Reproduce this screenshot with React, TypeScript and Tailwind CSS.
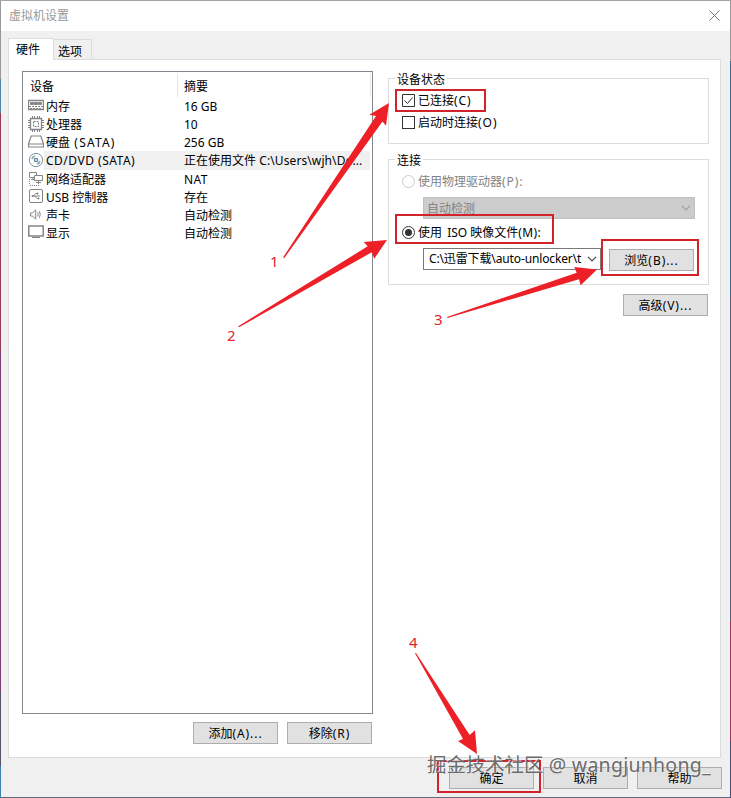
import type { ReactNode } from "react"

const s = { fill: "none", stroke: "#858585", strokeWidth: 1 }

const MemoryIcon = () => (
  <svg width="16" height="16" viewBox="0 0 16 16" {...s}>
    <path d="M.5 2.5h15v9H.5z" strokeWidth="1.3" />
    <path d="M2.5 4.5h3v2h-3zM6.5 4.5h3v2h-3zM10.5 4.5h3v2h-3z" fill="#858585" />
    <path d="M1 8.5h14M2 10.5h12" strokeDasharray="2 1" />
  </svg>
)

const CpuIcon = () => (
  <svg width="16" height="16" viewBox="0 0 16 16" {...s}>
    <path d="M2.5 2.5h11v11h-11z" strokeWidth="1.3" />
    <path d="M5.5 5.5h5v5h-5z" strokeDasharray="2 1" />
    <path d="M4.5 0v2M6.5 0v2M9.5 0v2M11.5 0v2M4.5 14v2M6.5 14v2M9.5 14v2M11.5 14v2M0 4.5h2M0 6.5h2M0 9.5h2M0 11.5h2M14 4.5h2M14 6.5h2M14 9.5h2M14 11.5h2" />
  </svg>
)

const DiskIcon = () => (
  <svg width="16" height="16" viewBox="0 0 16 16" {...s}>
    <path d="M3.2 2h9.6l2.7 8v3H.5v-3zM.5 10h15" strokeWidth="1.2" />
  </svg>
)

const DiscIcon = () => (
  <svg width="16" height="16" viewBox="0 0 16 16" fill="none">
    <circle cx="8" cy="8" r="6.7" stroke="#7895a6" />
    <circle cx="8" cy="8" r="1.6" stroke="#64869a" strokeWidth="1.4" />
    <path d="M4 7a4.2 4.2 0 0 1 3-3M12 9a4.2 4.2 0 0 1-3 3" stroke="#8aa5b4" strokeWidth="1.8" />
  </svg>
)

const NetworkIcon = () => (
  <svg width="16" height="16" viewBox="0 0 16 16" {...s}>
    <path d="M1.5 1.5h7v5h-7zM5 6.5v2M3 8.5h3" />
    <path d="M6.5 4.5h8v5h-8z" fill="#fff" />
    <path d="M10.5 9.5v2M8 11.5h5" />
    <path d="M1.5 8v6M2 14.5h9M10.5 12v2" strokeDasharray="1 1" />
  </svg>
)

const UsbIcon = () => (
  <svg width="16" height="16" viewBox="0 0 16 16" {...s}>
    <rect x="1.5" y=".5" width="13" height="13" rx="1.5" />
    <path d="M4 7h8M5.5 7l2-2.5h2M7 7l2 2.5h1.5" />
    <path d="M4 6.5h1v1H4zM9 4h1v1H9zM10 9h1v1h-1z" fill="#858585" />
  </svg>
)

const SoundIcon = () => (
  <svg width="16" height="16" viewBox="0 0 16 16" {...s}>
    <path d="M2.5 6h2l3.2-3.2v9.4L4.5 9h-2z" />
    <path d="M9.7 5.5q1 2 0 4M11.4 4.2q1.7 3.3 0 6.6" />
  </svg>
)

const DisplayIcon = () => (
  <svg width="16" height="16" viewBox="0 0 16 16" {...s}>
    <path d="M.8 1h14.4v10H.8z" strokeWidth="1.5" />
    <path d="M4 12.5h8" />
  </svg>
)

const devices = [
  { icon: MemoryIcon, name: "内存", summary: "16 GB" },
  { icon: CpuIcon, name: "处理器", summary: "10" },
  { icon: DiskIcon, name: <>硬盘<span className="tracking-[1.2px]"> (SATA)</span></>, summary: "256 GB" },
  {
    icon: DiscIcon,
    name: <span className="tracking-[0.5px]">CD/DVD (SATA)</span>,
    summary: <>正在使用文件<span className="tracking-[0.1px]"> C:\Users\wjh\De...</span></>,
    selected: true,
  },
  { icon: NetworkIcon, name: "网络适配器", summary: <span className="tracking-[0.4px]">NAT</span> },
  { icon: UsbIcon, name: "USB 控制器", summary: "存在" },
  { icon: SoundIcon, name: "声卡", summary: "自动检测" },
  { icon: DisplayIcon, name: "显示", summary: "自动检测" },
]

function Latin({ children }: { children: ReactNode }) {
  return <span className="tracking-[0.95px]">{children}</span>
}

function Button({ children }: { children: ReactNode }) {
  return (
    <button className="flex h-[22px] w-[85px] shrink-0 items-center justify-center border border-[#adadad] bg-[#e1e1e1] pt-0.5">
      {children}
    </button>
  )
}

function Group({ title, className, children }: { title: string; className: string; children: ReactNode }) {
  return (
    <fieldset className={`w-[321px] border border-[#dcdcdc] ${className}`}>
      <legend className="ml-1.5 h-4 px-0.5 leading-[19px]">{title}</legend>
      {children}
    </fieldset>
  )
}

function Chevron({ color }: { color: string }) {
  return (
    <svg width="10" height="6" viewBox="0 0 10 6" fill="none" stroke={color} strokeWidth="1.2">
      <path d="M1 .8l4 4 4-4" />
    </svg>
  )
}

function DeviceList() {
  return (
    <div className="h-[643px] w-[351px] border border-[#828790] bg-white">
      <div className="flex h-[25px] pt-px">
        <div className="w-[155px] border-r border-[#e5e5e5] pl-[7px] leading-[27px]">设备</div>
        <div className="w-[193px] border-r border-[#e5e5e5] pl-1.5 leading-[27px]">摘要</div>
      </div>
      {devices.map(({ icon: Icon, name, summary, selected }, i) => (
        <div key={i} className="flex h-[18.15px] items-center pl-[5px]">
          <Icon />
          <div className={`flex h-full w-[326px] items-center pt-0.5 ${selected ? "bg-[#f0f0f0]" : ""}`}>
            <span className="w-[138px] pl-0.5">{name}</span>
            <span className="pl-0.5">{summary}</span>
          </div>
        </div>
      ))}
    </div>
  )
}

function Annotations() {
  return (
    <>
      <svg className="pointer-events-none absolute inset-0" width="731" height="798" fill="#ec2026">
        <path d="M283 257.5L376 116L369.3 114.7L389 103L386 125.7L382.5 121.5L284.3 258Z" />
        <path d="M238.3 326.3L367.7 246.3L363.7 242L387 240L374.3 258.7L371.7 252.3L239 327.3Z" />
        <path d="M447 317L576.7 272.7L574.3 267L597 269.5L580.7 285.3L579 279.3L447.3 318Z" />
        <path d="M415 653.3L463 739L458 741L477 754L475 730.3L469.7 735L416 653Z" />
        <g fill="none" stroke="#d2232a" strokeWidth="2">
          <path d="M396 90h89v21h-89zM396 215h157v28H396zM602 240h96v35h-96zM438 761h102v31H438z" />
        </g>
      </svg>
      <div className="font-['Noto_Sans',sans-serif] text-[15px] leading-4 text-[#e0242b]">
        <span className="absolute left-[270px] top-[253px]">1</span>
        <span className="absolute left-[227px] top-[327px]">2</span>
        <span className="absolute left-[434px] top-[311px]">3</span>
        <span className="absolute left-[409px] top-[634px]">4</span>
      </div>
      <div className="absolute left-[427px] top-[751px] whitespace-nowrap text-[19.4px] leading-7 text-[#6c6c6c] [text-shadow:-1px_-1px_0_#ffffffb0]">
        掘金技术社区<span className="tracking-[0.32px]"> @ wangjunhong_</span>
      </div>
    </>
  )
}

function App() {
  return (
    <div className="relative flex h-[798px] w-[731px] overflow-hidden bg-[#a4a4a4] pt-px font-['Noto_Sans','Noto_Sans_CJK_SC',sans-serif] text-xs text-black">
      <div className="w-px bg-[linear-gradient(#999_0_78px,#4c85a8_78px_112px,#96385a_112px_350px,#7a3c73_350px_690px,#555366_690px_765px,#3d7fae_765px)]" />
      <div className="flex h-full w-[729px] flex-col border-b border-[#646a7c] bg-[#f0f0f0]">
        <div className="flex h-[30px] shrink-0 items-center justify-between bg-white pl-2 pr-2.5 text-[#999]">
          <span>虚拟机设置</span>
          <svg className="mb-0.5" width="11" height="11" viewBox="0 0 11 11" stroke="#777">
            <path d="M.5.5l10 10M10.5.5l-10 10" />
          </svg>
        </div>
        <div className="flex h-7 shrink-0 items-end pl-[7px]">
          <div className="z-10 -mb-px flex h-[22px] w-[46px] items-center border border-b-0 border-[#dcdcdc] bg-white pl-[7px]">硬件</div>
          <div className="flex h-5 w-[38px] items-center border border-b-0 border-l-0 border-[#dcdcdc] pl-1 pt-1">选项</div>
        </div>
        <div className="mx-[7px] flex h-[699px] w-[713px] shrink-0 border border-[#dcdcdc] bg-white pl-[13px] pt-[11px]">
          <div>
            <DeviceList />
            <div className="mt-2 flex justify-end gap-[9px] pr-px">
              <Button>添加<Latin>(A)...</Latin></Button>
              <Button>移除<Latin>(R)</Latin></Button>
            </div>
          </div>
          <div className="-mt-px ml-[15px]">
            <Group title="设备状态" className="h-[74px]">
              <div className="space-y-[3px] pl-[13px] pt-[5px]">
                <label className="flex h-[19px] items-center gap-[3px]">
                  <svg width="13" height="13" viewBox="0 0 13 13" fill="none" stroke="#333">
                    <path d="M.5.5h12v12H.5zM2.5 6.5l3 3 5-6" />
                  </svg>
                  <span className="pt-px">已连接<Latin>(C)</Latin></span>
                </label>
                <label className="flex h-[19px] items-center gap-[3px]">
                  <span className="size-[13px] border border-[#333]" />
                  <span className="pt-px">启动时连接<Latin>(O)</Latin></span>
                </label>
              </div>
            </Group>
            <Group title="连接" className="mt-[7px] h-[134px]">
              <div className="pl-[13px] pt-[5px]">
                <label className="flex h-[19px] items-center gap-[3px] text-[#838383]">
                  <span className="size-[13px] rounded-full border border-[#ccc]" />
                  <span className="pt-px">使用物理驱动器<Latin>(P):</Latin></span>
                </label>
                <div className="ml-[21px] mt-1.5 flex h-[22px] w-[272px] items-center justify-between border border-[#bfbfbf] bg-[#ccc] pl-[3px] pr-[3px] text-[#838383]">
                  <span className="pt-0.5">自动检测</span>
                  <Chevron color="#a0a0a0" />
                </div>
                <label className="mt-1 flex h-[19px] items-center gap-[3px]">
                  <span className="flex size-[13px] items-center justify-center rounded-full border border-[#333]">
                    <span className="size-[7px] rounded-full bg-[#333]" />
                  </span>
                  <span className="pt-px">使用<span className="pl-0.5"> ISO 映像文件</span><span className="tracking-[0.4px]">(M):</span></span>
                </label>
                <div className="ml-[21px] mt-1.5 flex">
                  <div className="flex h-[22px] w-[178px] items-center border border-[#7a7a7a] pl-[5px]">
                    <span className="w-[153px] whitespace-nowrap tracking-[-0.13px]">C:\迅雷下载\auto-unlocker\t</span>
                    <span className="ml-[5px]"><Chevron color="#444" /></span>
                  </div>
                  <div className="ml-2 mt-px"><Button>浏览<Latin>(B)...</Latin></Button></div>
                </div>
              </div>
            </Group>
            <div className="mt-[9px] flex justify-end pr-px">
              <Button>高级<Latin>(V)...</Latin></Button>
            </div>
          </div>
        </div>
        <div className="mt-[9px] flex justify-end gap-[9px] pr-2">
          <Button>确定</Button>
          <Button>取消</Button>
          <Button>帮助</Button>
        </div>
      </div>
      <div className="w-px bg-[linear-gradient(#999_0_60px,#3a6a9c_60px_295px,#55607c_295px_620px,#a03468_620px_740px,#4b4b78_740px)]" />
      <Annotations />
    </div>
  )
}

export default App
